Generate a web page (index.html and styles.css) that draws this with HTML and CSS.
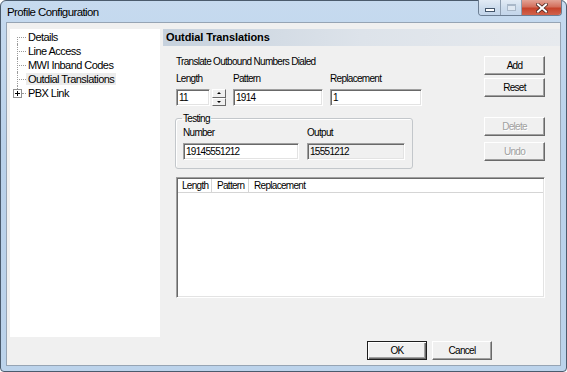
FILE: index.html
```html
<!DOCTYPE html>
<html lang="en">
<head>
    <meta charset="UTF-8">
    <title>Profile Configuration</title>
    <link rel="stylesheet" href="styles.css">
</head>
<body>
    <div class="window">
        <div class="titlebar">
            <span class="title">Profile Configuration</span>
            <div class="caption-buttons">
                <span class="cb cb-min"><i></i></span>
                <span class="cb cb-max"><i></i></span>
                <span class="cb cb-close">
                    <svg width="12" height="10" viewBox="0 0 12 10">
                        <path d="M2 1.5 L10 8.5 M10 1.5 L2 8.5" stroke="#4a2620" stroke-width="3.6" stroke-linecap="square"/>
                        <path d="M2 1.5 L10 8.5 M10 1.5 L2 8.5" stroke="#fff" stroke-width="2" stroke-linecap="square"/>
                    </svg>
                </span>
            </div>
        </div>

        <div class="client">
            <div class="main">
                <!-- Navigation tree -->
                <ul class="tree">
                    <li class="node first"><span>Details</span></li>
                    <li class="node"><span>Line Access</span></li>
                    <li class="node"><span>MWI Inband Codes</span></li>
                    <li class="node selected"><span>Outdial Translations</span></li>
                    <li class="node last"><b class="expander"></b><span>PBX Link</span></li>
                </ul>

                <!-- Property page -->
                <div class="page">
                    <h2 class="page-title">Outdial Translations</h2>
                    <div class="page-body">
                        <div class="upper">
                            <div class="fields">
                                <p class="caption">Translate Outbound Numbers Dialed</p>
                                <div class="row">
                                    <div class="field">
                                        <span class="label">Length</span>
                                        <div class="spin-wrap">
                                            <input class="tb w-len" value="11">
                                            <span class="spin"><b class="up"></b><b class="down"></b></span>
                                        </div>
                                    </div>
                                    <div class="field">
                                        <span class="label">Pattern</span>
                                        <input class="tb w-pat" value="1914">
                                    </div>
                                    <div class="field">
                                        <span class="label">Replacement</span>
                                        <input class="tb w-rep" value="1">
                                    </div>
                                </div>

                                <fieldset class="group">
                                    <legend>Testing</legend>
                                    <div class="row row-test">
                                        <div class="field">
                                            <span class="label">Number</span>
                                            <input class="tb w-num" value="19145551212">
                                        </div>
                                        <div class="field">
                                            <span class="label">Output</span>
                                            <input class="tb w-out readonly" value="15551212" readonly>
                                        </div>
                                    </div>
                                </fieldset>
                            </div>

                            <div class="actions">
                                <button class="btn">Add</button>
                                <button class="btn btn-reset">Reset</button>
                                <button class="btn btn-delete" disabled>Delete</button>
                                <button class="btn btn-undo" disabled>Undo</button>
                            </div>
                        </div>

                        <div class="list">
                            <div class="list-head">
                                <span class="col col-len">Length</span>
                                <span class="col col-pat">Pattern</span>
                                <span class="col col-rep">Replacement</span>
                            </div>
                        </div>
                    </div>
                </div>
            </div>

            <div class="footer">
                <button class="btn btn-default">OK</button>
                <button class="btn">Cancel</button>
            </div>
        </div>
    </div>
</body>
</html>
```

FILE: styles.css
```css
/* Reset */
* {
    margin: 0;
    padding: 0;
    box-sizing: border-box;
}

html, body {
    background: #fff;
}

/* The dialog font is narrow, so the text is tightened a little */
body {
    font-family: "Liberation Sans", Arial, sans-serif;
    font-size: 10px;
    letter-spacing: -0.7px;
    color: #000;
}

/* Window frame */
.window {
    width: 567px;
    height: 372px;
    display: flex;
    flex-direction: column;
    border: 1px solid #4b5b6d;
    border-radius: 6px 6px 4px 4px;
    background: linear-gradient(#c6daef, #b9d1ea 40%, #bcd3eb);
    padding: 0 5px 5px;
}

.titlebar {
    height: 21px;
    display: flex;
    justify-content: space-between;
    align-items: flex-start;
}

.title {
    font-size: 11.5px;
    letter-spacing: -0.6px;
    line-height: 22px;
    margin-left: 1px;
}

/* Minimize / maximize / close */
.caption-buttons {
    display: flex;
    height: 16px;
    margin-top: -1px;
    margin-right: -1px;
    border: 1px solid #6c7e93;
    border-top: none;
    border-radius: 0 0 4px 4px;
    overflow: hidden;
}

.cb {
    display: flex;
    align-items: center;
    justify-content: center;
    height: 100%;
}

.cb-min,
.cb-max {
    width: 22px;
    background: linear-gradient(#e2ebf5, #cedded 50%, #c3d5ea);
    border-right: 1px solid #8d9db0;
}

.cb-max {
    width: 21px;
}

.cb-min i {
    width: 10px;
    height: 4px;
    margin-top: 5px;
    background: #fff;
    border: 1px solid #44566b;
}

.cb-max i {
    width: 9px;
    height: 7px;
    border: 1px solid #a9b8c9;
    border-top-width: 2px;
    background: #dfe8f2;
}

.cb-close {
    width: 39px;
    background: linear-gradient(#e3a395, #d3705d 45%, #c6432b 55%, #d0624b);
}

/* Client area */
.client {
    flex: 1;
    display: flex;
    flex-direction: column;
    background: #f0f0f0;
    border: 1px solid #96a4b4;
    padding: 6px 0 0 3px;
}

.main {
    display: flex;
    height: 308px;
}

/* Tree view */
.tree {
    width: 150px;
    background: #fff;
    list-style: none;
    padding-top: 1px;
    font-size: 11px;
    letter-spacing: -0.55px;
}

.node {
    position: relative;
    height: 14px;
    line-height: 14px;
    padding-left: 16px;
    white-space: nowrap;
}

.node span {
    padding: 0 2px;
}

.node::before {
    content: "";
    position: absolute;
    left: 7px;
    top: 7px;
    width: 9px;
    border-top: 1px dotted #9a9a9a;
}

.node::after {
    content: "";
    position: absolute;
    left: 7px;
    top: 0;
    height: 14px;
    border-left: 1px dotted #9a9a9a;
}

.node.first::after {
    top: 7px;
    height: 7px;
}

.node.last::after {
    height: 3px;
}

.node.last::before {
    left: 12px;
    width: 4px;
}

.node.selected span {
    background: #ececec;
}

.expander {
    position: absolute;
    left: 3px;
    top: 3px;
    width: 9px;
    height: 9px;
    border: 1px solid #919191;
    background: #fff;
    z-index: 1;
}

.expander::before,
.expander::after {
    content: "";
    position: absolute;
    background: #000;
}

.expander::before {
    left: 1px;
    top: 3px;
    width: 5px;
    height: 1px;
}

.expander::after {
    left: 3px;
    top: 1px;
    width: 1px;
    height: 5px;
}

/* Property page */
.page {
    flex: 1;
    display: flex;
    flex-direction: column;
    margin-left: 3px;
}

.page-title {
    height: 17px;
    line-height: 17px;
    padding-left: 3px;
    font-size: 11px;
    letter-spacing: -0.1px;
    font-weight: bold;
    background: linear-gradient(to right, #c6d1dd, #dde3ea 50%, #e7eaee);
}

.page-body {
    padding: 0 15px 0 13px;
}

.upper {
    display: flex;
    justify-content: space-between;
}

.fields {
    display: flex;
    flex-direction: column;
    align-items: flex-start;
}

.caption {
    margin-top: 9px;
    line-height: 13px;
}

.row {
    display: flex;
    gap: 7px;
    margin-top: 4px;
}

.field {
    display: flex;
    flex-direction: column;
    gap: 4px;
}

.label {
    line-height: 13px;
    white-space: nowrap;
}

/* Text boxes */
.tb {
    height: 17px;
    padding: 0 2px;
    font: inherit;
    letter-spacing: inherit;
    color: #000;
    background: #fff;
    border: 1px solid;
    border-color: #a0a0a0 #fff #fff #a0a0a0;
    box-shadow: inset 1px 1px #696969, inset -1px -1px #e3e3e3;
    outline: none;
}

.tb.readonly {
    background: #f0f0f0;
}

.w-len { width: 34px; }
.w-pat { width: 90px; }
.w-rep { width: 92px; }
.w-num { width: 116px; }
.w-out { width: 98px; }

.spin-wrap {
    display: flex;
    gap: 2px;
}

.spin {
    display: flex;
    flex-direction: column;
    width: 14px;
    height: 17px;
}

.spin b {
    flex: 1;
    display: flex;
    align-items: center;
    justify-content: center;
    background: #f0f0f0;
    border: 1px solid;
    border-color: #fff #696969 #696969 #fff;
}

.spin b::after {
    content: "";
    border-left: 2px solid transparent;
    border-right: 2px solid transparent;
}

.spin .up::after {
    border-bottom: 2px solid #000;
}

.spin .down::after {
    border-top: 2px solid #000;
}

/* Testing group box */
.group {
    margin: 6px 0 0 -1px;
    padding: 0 7px 8px;
    border: 1px solid #c3c7cb;
    border-radius: 3px;
    box-shadow: inset 1px 1px #fff;
}

.group legend {
    line-height: 13px;
    padding: 0 1px;
    margin-left: -1px;
}

.row-test {
    gap: 8px;
    margin-top: 1px;
}

/* Push buttons */
.btn {
    width: 61px;
    height: 19px;
    font: inherit;
    letter-spacing: inherit;
    color: #000;
    background: #f0f0f0;
    border: 1px solid;
    border-color: #fff #696969 #696969 #fff;
    box-shadow: inset -1px -1px #a0a0a0;
}

.btn:disabled {
    color: #a0a0a0;
    text-shadow: 1px 1px #fff;
}

.actions {
    display: flex;
    flex-direction: column;
    padding-top: 10px;
}

.btn-reset { margin-top: 3px; }
.btn-delete { margin-top: 20px; }
.btn-undo { margin-top: 6px; }

/* List view */
.list {
    margin-top: 8px;
    height: 121px;
    background: #fff;
    border: 1px solid;
    border-color: #a0a0a0 #fff #fff #a0a0a0;
    box-shadow: inset 1px 1px #696969, inset -1px -1px #e3e3e3;
    padding: 1px;
}

.list-head {
    display: flex;
    height: 14px;
    border-bottom: 1px solid #d5d5d5;
}

.col {
    line-height: 13px;
    padding-left: 4px;
    border-right: 1px solid #d5d5d5;
    white-space: nowrap;
}

.col-len { width: 34px; }
.col-pat { width: 37px; padding-left: 5px; }
.col-rep { padding-left: 5px; border-right: none; }

/* Dialog buttons */
.footer {
    display: flex;
    justify-content: flex-end;
    gap: 5px;
    padding: 4px 68px 0 0;
}

.footer .btn {
    width: 60px;
}

.btn-default {
    border-color: #1e1e1e;
    box-shadow: inset 1px 1px #fff, inset -1px -1px #696969, inset -2px -2px #a0a0a0;
}
```
